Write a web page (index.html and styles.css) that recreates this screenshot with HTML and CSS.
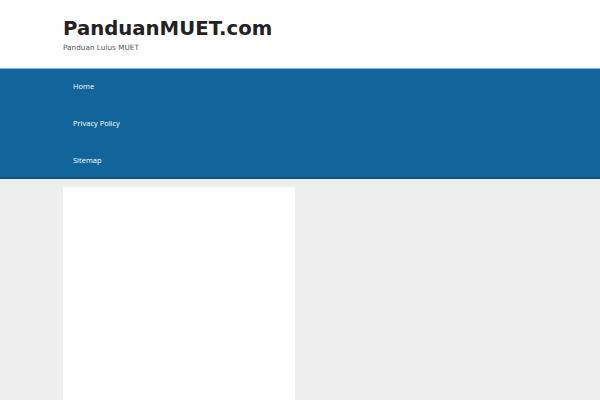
FILE: index.html
```html
<!DOCTYPE html>
<html>
<head>
<meta charset="utf-8">
<link rel="stylesheet" href="styles.css">
</head>
<body>
<header class="site-header">
  <div class="wrap">
    <h1 class="site-title">PanduanMUET.com</h1>
    <p class="site-desc">Panduan Lulus MUET</p>
  </div>
</header>
<nav class="main-nav">
  <ul class="wrap menu">
    <li><a href="#">Home</a></li>
    <li><a href="#">Privacy Policy</a></li>
    <li><a href="#">Sitemap</a></li>
  </ul>
</nav>
<main class="content">
  <div class="wrap">
    <div class="card"></div>
  </div>
</main>
</body>
</html>
```
FILE: styles.css
```css
html, body {
  margin: 0;
  padding: 0;
  background: #eeeeee;
  font-family: "DejaVu Sans", sans-serif;
}
.wrap {
  width: 474px;
  margin: 0 auto;
  padding: 0;
  box-sizing: border-box;
}
.site-header {
  background: #ffffff;
  height: 68px;
}
.site-header .wrap {
  padding-top: 17px;
}
.site-title {
  margin: 0;
  font-size: 19.7px;
  line-height: 24px;
  font-weight: bold;
  color: #222222;
}
.site-desc {
  margin: 2px 0 0;
  font-size: 7.3px;
  line-height: 10px;
  color: #555555;
}
.main-nav {
  background: #11659a;
  border-top: 1px solid #7fb2d4;
  border-bottom: 2px solid #0d5584;
  height: 108px;
}
.menu {
  list-style: none;
  display: flex;
  flex-direction: column;
}
.menu li {
  height: 36.7px;
  display: flex;
  align-items: center;
}
.menu li:first-child {
  margin-top: -1px;
}
.menu a {
  color: #ffffff;
  text-decoration: none;
  font-family: "Open Sans", sans-serif;
  font-size: 7.5px;
  padding-left: 10px;
}
.content {
  padding-top: 8px;
}
.card {
  width: 232px;
  height: 213px;
  background: #ffffff;
}
```
